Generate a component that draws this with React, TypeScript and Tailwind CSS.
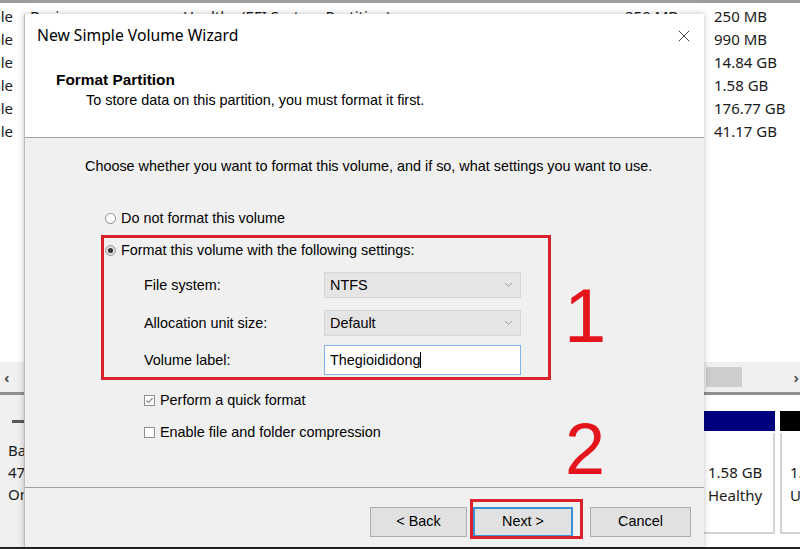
import { X } from 'lucide-react'

const rows = [
  { name: 'Simple', layout: 'Basic', status: 'Healthy (EFI System Partition)', cap: '250 MB', free: '250 MB' },
  { name: 'Simple', layout: 'Basic', status: 'Healthy (Recovery Partition)', cap: '990 MB', free: '990 MB' },
  { name: 'Simple', layout: 'Basic', status: 'Healthy (Recovery Partition)', cap: '14.84 GB', free: '14.84 GB' },
  { name: 'Simple', layout: 'Basic', status: 'Healthy (Primary Partition)', cap: '1.58 GB', free: '1.58 GB' },
  { name: 'Simple', layout: 'Basic', status: 'Healthy (Boot, Page File, Crash Dump)', cap: '237.26 GB', free: '176.77 GB' },
  { name: 'Simple', layout: 'Basic', status: 'Healthy (Primary Partition)', cap: '220.84 GB', free: '41.17 GB' },
]

const Chevron = () => (
  <svg width="9" height="6" viewBox="0 0 9 6" className="shrink-0">
    <polyline points="1,1 4.5,4.5 8,1" fill="none" stroke="#a0a0a0" strokeWidth="1" />
  </svg>
)

const Radio = ({ checked }: { checked?: boolean }) => (
  <span
    className={`w-[11px] h-[11px] rounded-full border flex items-center justify-center shrink-0 ${
      checked ? 'border-[#9a9a9a] bg-[#dcdcdc]' : 'border-[#8c8c8c] bg-white'
    }`}
  >
    {checked && <span className="w-[5px] h-[5px] rounded-full bg-[#333]" />}
  </span>
)

const Checkbox = ({ checked }: { checked?: boolean }) => (
  <span className="w-[11px] h-[11px] border border-[#8f8f8f] bg-white flex items-center justify-center shrink-0">
    {checked && (
      <svg width="9" height="9" viewBox="0 0 9 9">
        <polyline points="1.5,4.5 3.6,6.6 7.5,2" fill="none" stroke="#8a8a8a" strokeWidth="1.2" />
      </svg>
    )}
  </span>
)

const Select = ({ value }: { value: string }) => (
  <div className="w-[197px] h-[26px] bg-[#e5e5e5] border border-[#d6d6d6] flex items-center justify-between pl-[5px] pr-[7px]">
    <span className="text-black">{value}</span>
    <Chevron />
  </div>
)

const App = () => {
  return (
    <div className="relative w-[800px] h-[549px] overflow-hidden bg-white text-[#1a1a1a] font-['Noto_Sans',sans-serif]">
      {/* Disk Management behind the wizard */}
      <div className="flex flex-col h-full">
        <div className="h-[5px] border-t-[3px] border-[#9c9c9c] bg-white" />
        <div className="h-[357px] flex flex-col">
          {rows.map((r, i) => (
            <div key={i} className="h-[23px] flex items-center text-[15px] leading-none whitespace-nowrap">
              <div className="w-[13px] overflow-hidden flex justify-end">
                <span>{r.name}</span>
              </div>
              <div className="w-[170px] pl-[17px]">{r.layout}</div>
              <div className="w-[442px]">{r.status}</div>
              <div className="w-[89px]">{r.cap}</div>
              <div>{r.free}</div>
            </div>
          ))}
        </div>
        <div className="h-[30px] bg-[#f0f0f0] flex items-center justify-between text-[#555]">
          <span className="pl-[4px] text-[15px] font-bold">‹</span>
          <div className="flex items-center gap-[52px]">
            <div className="w-[36px] h-[20px] bg-[#cdcdcd]" />
            <span className="pr-[1px] text-[15px] font-bold">›</span>
          </div>
        </div>
        <div className="h-[3px] bg-[#8f8f8f]" />
        <div className="flex-1 flex bg-white">
          <div className="w-[120px] pl-[8px] pt-[25px] text-[15px] leading-[22px] bg-[#f0f0f0]">
            <div className="h-[3px] w-[40px] bg-[#5a5a5a] ml-[4px] mb-[16px]" />
            <div>Basic</div>
            <div>476.81 GB</div>
            <div>Online</div>
          </div>
          <div className="flex-1" />
          <div className="w-[72px] pt-[16px] pr-[1px]">
            <div className="h-[20px] bg-[#000080]" />
            <div className="h-[101px] mt-[2px] border-r-[2px] border-b-[2px] border-[#d4d4d4] pl-[4px] pt-[28px] text-[15px] leading-[23px] whitespace-nowrap">
              <div>1.58 GB</div>
              <div>Healthy</div>
            </div>
          </div>
          <div className="w-[62px] -mr-[38px] pl-[4px] pt-[16px]">
            <div className="h-[20px] bg-black" />
            <div className="h-[101px] mt-[2px] border-l-[2px] border-b-[2px] border-[#d4d4d4] pl-[8px] pt-[28px] text-[15px] leading-[23px] whitespace-nowrap overflow-hidden">
              <div>1.78 GB</div>
              <div>Unallocated</div>
            </div>
          </div>
        </div>
        <div className="h-[2px] bg-[#222]" />
      </div>

      {/* Wizard window */}
      <div className="absolute left-[24px] top-[14px] w-[680px] h-[533px] flex flex-col bg-[#f0f0f0] border-l border-[#bdbdbd] shadow-[0_0_6px_rgba(0,0,0,0.25)] font-['Liberation_Sans',Arial,sans-serif]">
        <div className="h-[124px] bg-white border-b border-[#a0a0a0] flex flex-col">
          <div className="h-[44px] flex items-center justify-between pl-[12px] pr-[10px]">
            <span className="text-[15.7px] text-black font-['Noto_Sans',sans-serif]">New Simple Volume Wizard</span>
            <X size={20} strokeWidth={1} className="text-[#222]" />
          </div>
          <div className="pl-[31px] pt-[13px] text-[15.4px] leading-[18px] font-bold text-black">Format Partition</div>
          <div className="pl-[61px] mt-[3px] text-[14.4px] leading-[16px] text-black">
            To store data on this partition, you must format it first.
          </div>
        </div>

        <div className="relative flex-1 flex flex-col text-[14.4px] leading-[16px] text-black">
          <div className="pl-[60px] pt-[20px]">
            Choose whether you want to format this volume, and if so, what settings you want to use.
          </div>

          <div className="pl-[80px] mt-[34px] h-[20px] flex items-center gap-[5px]">
            <Radio />
            <span>Do not format this volume</span>
          </div>

          <div className="ml-[76px] mt-[7px] w-[450px] h-[145px] border-[3px] border-[#d9222c] flex flex-col">
            <div className="h-[24px] pl-[1px] flex items-center gap-[5px]">
              <Radio checked />
              <span>Format this volume with the following settings:</span>
            </div>
            <div className="pl-[40px] mt-[10px] flex items-center">
              <span className="w-[180px]">File system:</span>
              <Select value="NTFS" />
            </div>
            <div className="pl-[40px] mt-[12px] flex items-center">
              <span className="w-[180px]">Allocation unit size:</span>
              <Select value="Default" />
            </div>
            <div className="pl-[40px] mt-[9px] flex items-center">
              <span className="w-[180px]">Volume label:</span>
              <div className="w-[197px] h-[30px] bg-white border border-[#7eb4ea] flex items-center pl-[5px]">
                <span>Thegioididong</span>
                <span className="w-px h-[16px] bg-black" />
              </div>
            </div>
          </div>

          <div className="pl-[119px] mt-[10px] h-[20px] flex items-center gap-[5px]">
            <Checkbox checked />
            <span>Perform a quick format</span>
          </div>
          <div className="pl-[119px] mt-[12px] h-[20px] flex items-center gap-[5px]">
            <Checkbox />
            <span>Enable file and folder compression</span>
          </div>

          <span className="absolute left-[539px] top-[140px] text-[76px] leading-none text-[#e3141c]">1</span>
          <span className="absolute left-[540px] top-[275px] text-[72px] leading-none text-[#e3141c]">2</span>
        </div>

        <div className="h-[60px] border-t border-[#a0a0a0] flex items-start justify-end pt-[19px] pr-[13px] text-[14.4px] text-black">
          <button className="w-[97px] h-[30px] bg-[#e1e1e1] border border-[#adadad]">&lt; Back</button>
          <div className="relative ml-[6px]">
            <button className="w-[100px] h-[30px] bg-[#e1e1e1] border-2 border-[#3c8fd6]">Next &gt;</button>
            <div className="absolute -left-[3px] -top-[8px] w-[113px] h-[40px] border-[3px] border-[#d9222c]" />
          </div>
          <button className="ml-[17px] w-[101px] h-[30px] bg-[#e1e1e1] border border-[#adadad]">Cancel</button>
        </div>
      </div>
    </div>
  )
}

export default App
